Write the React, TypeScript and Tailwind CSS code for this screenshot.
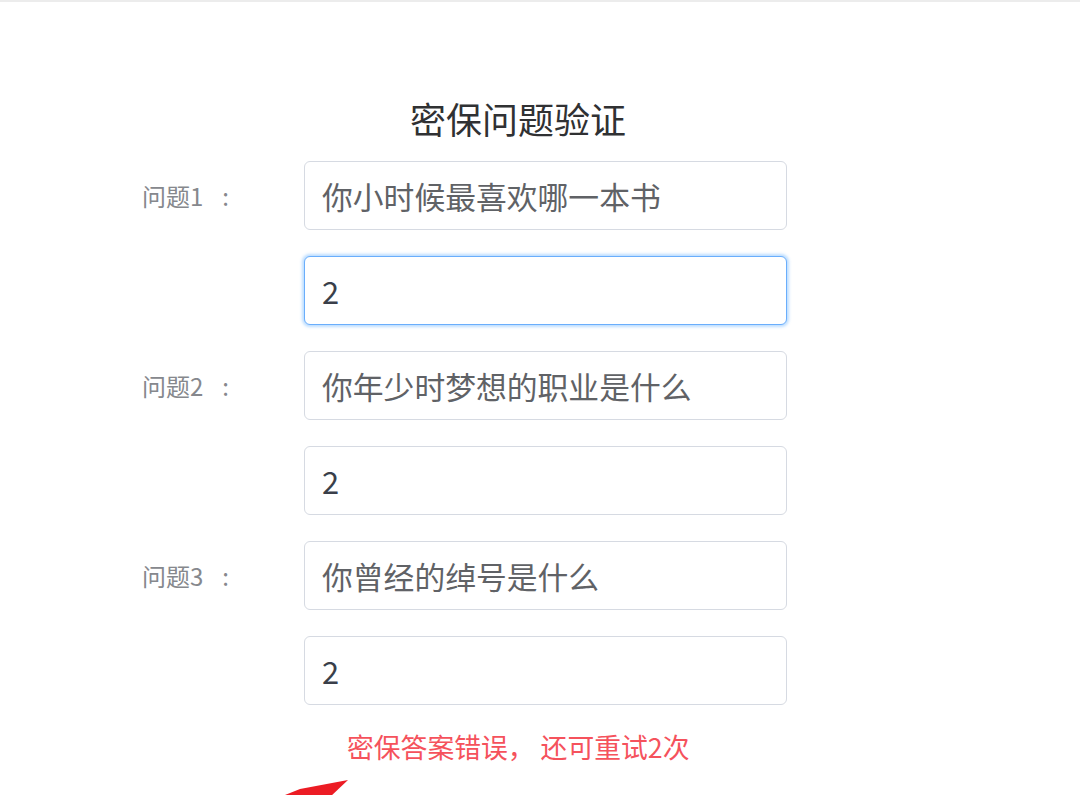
const font = { fontFamily: '"Noto Sans CJK SC", "Microsoft YaHei", sans-serif' };

type Row = { label?: string; value: string; focused?: boolean; dark?: boolean };

const rows: Row[] = [
  { label: "问题1", value: "你小时候最喜欢哪一本书" },
  { value: "2", focused: true, dark: true },
  { label: "问题2", value: "你年少时梦想的职业是什么" },
  { value: "2", dark: true },
  { label: "问题3", value: "你曾经的绰号是什么" },
  { value: "2", dark: true },
];

export default function App() {
  return (
    <div
      className="relative min-h-[795px] overflow-hidden border-t-2 border-[#ececec] bg-white"
      style={font}
    >
      <h1 className="ml-[140px] w-[756px] pt-[92px] text-center text-[36px] leading-[48px] text-[#303133]">
        密保问题验证
      </h1>

      <div className="mt-[19px] ml-[140px] flex flex-col gap-[26px]">
        {rows.map((r, i) => (
          <div key={i} className="flex items-center">
            <label className="w-[164px] pl-[2px] text-[24px] leading-[32px] text-[#86888d]">
              {r.label && (
                <>
                  {r.label}
                  <span className="ml-[19px]">:</span>
                </>
              )}
            </label>
            <input
              readOnly
              value={r.value}
              className={
                "h-[69px] w-[483px] rounded-[6px] border bg-white px-[17px] text-[30.8px] outline-none " +
                (r.dark ? "text-[#3a3f4a] " : "text-[#606266] ") +
                (r.focused
                  ? "border-[#6aaefc] shadow-[0_0_3px_2px_rgba(64,158,255,0.35)]"
                  : "border-[#d6dae2]")
              }
              style={font}
            />
          </div>
        ))}
      </div>

      <p className="mt-[24px] ml-[347px] text-[26.8px] leading-[36px] text-[#f5525c]">
        密保答案错误， 还可重试2次
      </p>

      <svg
        className="absolute left-[270px] top-[770px]"
        width="90"
        height="25"
        viewBox="0 0 90 25"
      >
        <polygon points="10,25 30,17 78,8 60,25" fill="#ec1c24" />
      </svg>
    </div>
  );
}
